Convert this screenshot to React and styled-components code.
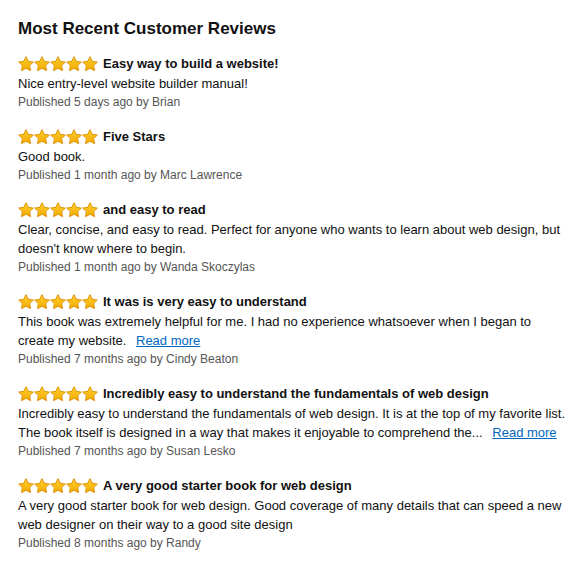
import React from "react";
import styled, { createGlobalStyle } from "styled-components";

const Global = createGlobalStyle`
  body { margin: 0; background: #fff; font-family: Arial, "Liberation Sans", Helvetica, sans-serif; color: #111; }
`;

const Page = styled.div`
  padding: 17px 10px 0 18px;
  width: 579px;
  box-sizing: border-box;
`;

const Heading = styled.h2`
  margin: 0 0 13px 0;
  font-size: 17px;
  line-height: 24px;
  font-weight: 700;
  color: #111;
`;

const List = styled.div`
  display: flex;
  flex-direction: column;
  gap: 15px;
`;

const Review = styled.div`
  display: flex;
  flex-direction: column;
`;

const TitleRow = styled.div`
  display: flex;
  align-items: center;
  gap: 5px;
  height: 20px;
`;

const Stars = styled.span`
  display: inline-flex;
  align-items: center;
`;

const Title = styled.span`
  font-size: 13px;
  font-weight: 700;
  line-height: 20px;
  color: #111;
`;

const Body = styled.div`
  font-size: 13px;
  line-height: 19px;
  color: #111;
`;

const Link = styled.a`
  color: #0066c0;
  text-decoration: underline;
  margin-left: 6px;
  cursor: pointer;
`;

const Meta = styled.div`
  font-size: 12px;
  line-height: 19px;
  color: #555;
`;

const Star = () => (
  <svg width="16" height="16" viewBox="0 0 24 24">
    <defs>
      <linearGradient id="sg" x1="0" y1="0" x2="0" y2="1">
        <stop offset="0" stopColor="#FFD22E" />
        <stop offset="1" stopColor="#F5A800" />
      </linearGradient>
    </defs>
    <path
      d="M12 1l3.4 7 7.6 1.1-5.5 5.3 1.3 7.6L12 18.4l-6.8 3.6 1.3-7.6L1 9.1l7.6-1.1z"
      fill="url(#sg)"
      stroke="#D99000"
      strokeWidth="1.4"
      strokeLinejoin="round"
    />
  </svg>
);

const reviews = [
  { title: "Easy way to build a website!", body: "Nice entry-level website builder manual!", meta: "Published 5 days ago by Brian" },
  { title: "Five Stars", body: "Good book.", meta: "Published 1 month ago by Marc Lawrence" },
  { title: "and easy to read", body: "Clear, concise, and easy to read. Perfect for anyone who wants to learn about web design, but doesn't know where to begin.", meta: "Published 1 month ago by Wanda Skoczylas" },
  { title: "It was is very easy to understand", body: "This book was extremely helpful for me. I had no experience whatsoever when I began to create my website.", more: true, meta: "Published 7 months ago by Cindy Beaton" },
  { title: "Incredibly easy to understand the fundamentals of web design", body: "Incredibly easy to understand the fundamentals of web design. It is at the top of my favorite list. The book itself is designed in a way that makes it enjoyable to comprehend the...", more: true, meta: "Published 7 months ago by Susan Lesko" },
  { title: "A very good starter book for web design", body: "A very good starter book for web design. Good coverage of many details that can speed a new web designer on their way to a good site design", meta: "Published 8 months ago by Randy" },
];

export default function App() {
  return (
    <>
      <Global />
      <Page>
        <Heading>Most Recent Customer Reviews</Heading>
        <List>
          {reviews.map((r, i) => (
            <Review key={i}>
              <TitleRow>
                <Stars>
                  {[0, 1, 2, 3, 4].map((s) => <Star key={s} />)}
                </Stars>
                <Title>{r.title}</Title>
              </TitleRow>
              <Body>
                {r.body}
                {r.more && <> <Link>Read more</Link></>}
              </Body>
              <Meta>{r.meta}</Meta>
            </Review>
          ))}
        </List>
      </Page>
    </>
  );
}
